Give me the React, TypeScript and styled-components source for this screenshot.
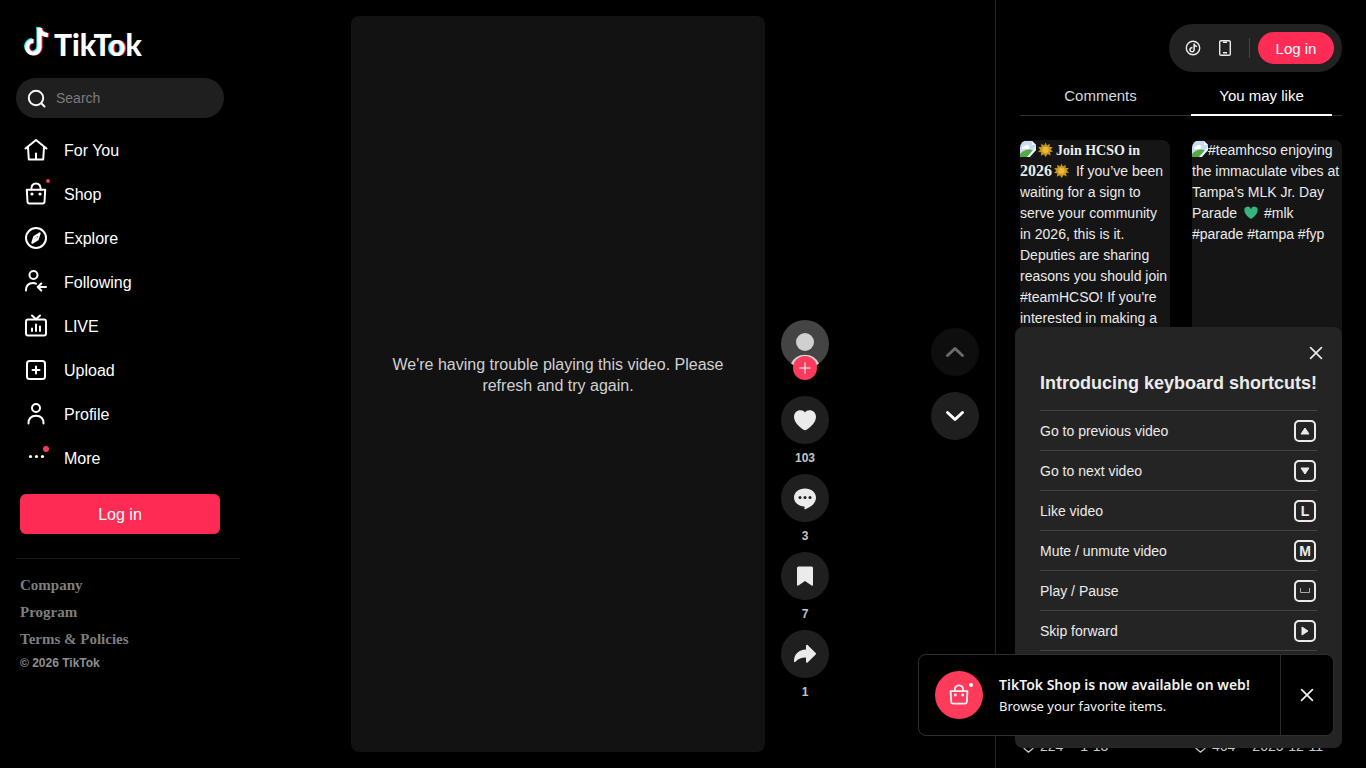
import React from "react";
import styled, { createGlobalStyle } from "styled-components";

const sans = `"Liberation Sans", Arial, sans-serif`;
const serif = `"Liberation Serif", "Times New Roman", serif`;
const brand = "#fe2c55";

const GlobalStyle = createGlobalStyle`
  * { box-sizing: border-box; }
  body { margin: 0; background: #000; color: #f6f6f6; font-family: ${sans}; }
  button { border: 0; padding: 0; background: none; color: inherit; font-family: inherit; cursor: pointer; }
  a { color: inherit; text-decoration: none; }
  svg { display: block; flex: none; }
  h2, p, ul { margin: 0; padding: 0; }
  ul { list-style: none; }
`;

const Page = styled.div`
  display: grid;
  grid-template-columns: 249px minmax(0, 1fr) 371px;
  grid-template-rows: 100vh;
  height: 100vh;
  overflow: hidden;
`;

/* Sidebar */
const Sidebar = styled.aside`
  display: flex;
  flex-direction: column;
  padding: 24px 9px 0 16px;
`;
const Logo = styled.a`
  display: flex;
  align-items: center;
  gap: 3px;
  height: 36px;
  margin: 0 0 18px 7px;
`;
const Wordmark = styled.span`
  padding-top: 3px;
  color: #fff;
  font: 900 30px/36px Lato, sans-serif;
`;
const ShadowLetter = styled.span`
  text-shadow: -1px 0 #25f4ee, 1px 0 ${brand};
`;
const SearchBox = styled.label`
  display: flex;
  align-items: center;
  gap: 8px;
  width: 208px;
  height: 40px;
  padding: 0 12px 0 8px;
  border-radius: 20px;
  background: #1f1f1f;
`;
const SearchInput = styled.input`
  flex: 1;
  min-width: 0;
  border: 0;
  outline: 0;
  padding: 0;
  background: transparent;
  color: #fff;
  font: 14px/20px ${sans};
  &::placeholder { color: #7c7c7c; opacity: 1; }
`;
const NavList = styled.ul`
  margin-top: 10px;
`;
const NavLink = styled.a`
  display: flex;
  align-items: center;
  gap: 16px;
  height: 44px;
  padding-left: 8px;
  font-size: 16px;
  color: #fff;
`;
const NavText = styled.span`
  padding-top: 2px;
`;
const IconWrap = styled.span`
  position: relative;
  display: block;
`;
const Dot = styled.span<{ $size: number; $top: number; $right: number; $color?: string }>`
  position: absolute;
  top: ${(p) => p.$top}px;
  right: ${(p) => p.$right}px;
  width: ${(p) => p.$size}px;
  height: ${(p) => p.$size}px;
  border-radius: 50%;
  background: ${(p) => p.$color ?? "#f33b5e"};
`;
const LoginButton = styled.button<{ $pill?: boolean }>`
  width: ${(p) => (p.$pill ? 76 : 200)}px;
  height: ${(p) => (p.$pill ? 32 : 40)}px;
  margin: ${(p) => (p.$pill ? "0" : "14px 0 0 4px")};
  padding-top: 1px;
  border-radius: ${(p) => (p.$pill ? 16 : 6)}px;
  background: ${brand};
  color: #fff;
  font-size: ${(p) => (p.$pill ? 15 : 16)}px;
`;
const FooterLinks = styled.footer`
  display: flex;
  flex-direction: column;
  margin-top: 24px;
  padding: 13px 0 0 4px;
  border-top: 1px solid #1a1a1a;
  color: #7e7e7e;
  font: bold 15px/27px ${serif};
`;
const Copyright = styled.small`
  color: #8f8f8f;
  font: bold 12px/20px ${sans};
`;

/* Player */
const Main = styled.main`
  display: flex;
  align-items: center;
  min-height: 0;
  padding: 16px 16px 16px 0;
`;
const Player = styled.section`
  flex: 1;
  display: flex;
  justify-content: center;
  gap: 16px;
  height: calc(100vh - 32px);
`;
const Video = styled.div`
  display: flex;
  align-items: center;
  aspect-ratio: 9 / 16;
  height: 100%;
  padding: 0 40px 18px;
  border-radius: 8px;
  background: #121212;
  color: #d0d0d0;
  font-size: 16px;
  line-height: 21px;
  text-align: center;
`;
const Actions = styled.div`
  display: flex;
  flex-direction: column;
  justify-content: flex-end;
  padding-bottom: 44px;
`;
const AvatarBlock = styled.div`
  position: relative;
  height: 76px;
`;
const FollowButton = styled.button`
  position: absolute;
  top: 36px;
  left: 12px;
  display: grid;
  place-items: center;
  width: 24px;
  height: 24px;
  border-radius: 50%;
  background: #fb3a5d;
`;
const RoundButton = styled.button<{ $faded?: boolean }>`
  display: grid;
  place-items: center;
  width: 48px;
  height: 48px;
  border-radius: 50%;
  background: ${(p) => (p.$faded ? "#0e0e0e" : "#1f1f1f")};
  color: ${(p) => (p.$faded ? "#6b6b6b" : "#fff")};
`;
const Action = styled.div`
  display: flex;
  flex-direction: column;
  align-items: center;
  height: 78px;
`;
const Count = styled.strong`
  margin-top: 6px;
  color: #c4c4c4;
  font-size: 12px;
  line-height: 16px;
`;
const Pager = styled.nav`
  display: flex;
  flex-direction: column;
  gap: 16px;
`;

/* Right column */
const Panel = styled.aside`
  display: flex;
  flex-direction: column;
  min-height: 0;
  padding: 24px 24px 0;
  border-left: 1px solid #242424;
`;
const TopBar = styled.div`
  align-self: flex-end;
  display: flex;
  align-items: center;
  height: 48px;
  padding: 0 8px 0 16px;
  border-radius: 24px;
  background: #222;
`;
const TopIcon = styled.button`
  margin-right: 16px;
`;
const Divider = styled.span`
  width: 1px;
  height: 20px;
  margin-right: 8px;
  background: #444;
`;
const Tabs = styled.div`
  display: flex;
  height: 44px;
  border-bottom: 1px solid #303030;
`;
const Tab = styled.button<{ $active?: boolean }>`
  flex: 1;
  height: 44px;
  margin: 0 10px;
  padding-top: 4px;
  border-bottom: 2px solid ${(p) => (p.$active ? "#fff" : "transparent")};
  color: ${(p) => (p.$active ? "#fff" : "#d8d8d8")};
  font-size: 15px;
`;
const Cards = styled.div`
  flex: 1;
  display: grid;
  grid-template-columns: 1fr 1fr;
  gap: 22px;
  min-height: 0;
  padding-top: 24px;
`;
const Card = styled.article`
  display: flex;
  flex-direction: column;
  min-height: 0;
`;
const Thumb = styled.div`
  flex: none;
  height: 200px;
  overflow: hidden;
  border-radius: 8px;
  background: #151515;
  color: #ebebeb;
  font-size: 14px;
  line-height: 21px;
  & svg { display: inline-block; vertical-align: -3px; }
`;
const SunIcon = styled.svg`
  margin: 0 3px 0 2px;
`;
const HeartIcon = styled.svg`
  margin: 0 1px 0 2px;
`;
const SerifText = styled.strong`
  font-family: ${serif};
`;
const SerifYear = styled(SerifText)`
  font-size: 16px;
  line-height: 20px;
`;
const Stats = styled.div`
  display: flex;
  align-items: center;
  gap: 4px;
  margin-top: auto;
  padding: 0 0 13px 1px;
  color: #c8c8c8;
  font-size: 14px;
  line-height: 18px;
`;
const DateText = styled.span`
  margin-left: 13px;
`;

/* Overlays */
const Shortcuts = styled.section`
  position: fixed;
  right: 24px;
  bottom: 20px;
  width: 327px;
  padding: 16px 25px 97px;
  border-radius: 8px;
  background: #242424;
  color: #ebebeb;
`;
const ShortcutsClose = styled.button`
  display: block;
  margin: 0 -9px 0 auto;
`;
const ShortcutsTitle = styled.h2`
  padding: 8px 0 14px;
  font-size: 18px;
  line-height: 25px;
  white-space: nowrap;
`;
const ShortcutRow = styled.li`
  display: flex;
  align-items: center;
  justify-content: space-between;
  height: 40px;
  border-top: 1px solid #444;
  font-size: 14px;
  &:last-child { height: 41px; border-bottom: 1px solid #444; }
`;
const Key = styled.kbd`
  display: grid;
  place-items: center;
  width: 22px;
  height: 22px;
  margin-right: 1px;
  border: 2px solid #ebebeb;
  border-radius: 5px;
  font: bold 14px/18px ${sans};
`;
const Toast = styled.section`
  position: fixed;
  right: 32px;
  bottom: 32px;
  display: flex;
  width: 416px;
  height: 82px;
  border: 1px solid #2f2f2f;
  border-radius: 8px;
  background: #000;
  color: #f2f2f2;
`;
const ToastBody = styled.div`
  flex: 1;
  display: flex;
  align-items: center;
  gap: 16px;
  padding-left: 16px;
  font: 13px/22px "Noto Sans", sans-serif;
  white-space: nowrap;
`;
const ToastBadge = styled.span`
  display: grid;
  place-items: center;
  width: 48px;
  height: 48px;
  border-radius: 50%;
  background: #ff3b5c;
`;
const ToastTitle = styled.h2`
  font-size: 14px;
  font-weight: 600;
  line-height: 21px;
`;
const ToastClose = styled.button`
  display: grid;
  place-items: center;
  width: 53px;
  border-left: 1px solid #2a2a2a;
`;

const notePath =
  "M12.525.02c1.31-.02 2.61-.01 3.91-.02.08 1.53.63 3.09 1.75 4.17 1.12 1.11 2.7 1.62 4.24 1.79v4.03c-1.44-.05-2.89-.35-4.2-.97-.57-.26-1.1-.59-1.62-.93-.01 2.92.01 5.84-.02 8.75-.08 1.4-.54 2.79-1.35 3.94-1.31 1.92-3.58 3.17-5.91 3.21-1.43.08-2.86-.31-4.08-1.03-2.02-1.19-3.44-3.37-3.65-5.71-.02-.5-.03-1-.01-1.49.18-1.9 1.12-3.72 2.58-4.96 1.66-1.44 3.98-2.13 6.15-1.72.02 1.48-.04 2.96-.04 4.44-.99-.32-2.15-.23-3.02.37-.63.41-1.11 1.04-1.36 1.75-.21.51-.15 1.07-.14 1.61.24 1.64 1.82 3.02 3.5 2.87 1.12-.01 2.19-.66 2.77-1.61.19-.33.4-.67.41-1.06.1-1.79.06-3.57.07-5.36.01-4.03-.01-8.05.02-12.07z";

const Line = ({ children, size = 24, width = 2 }: { children: React.ReactNode; size?: number; width?: number }) => (
  <svg width={size} height={size} viewBox="0 0 24 24" fill="none" stroke="currentColor" strokeWidth={width} strokeLinecap="round" strokeLinejoin="round" aria-hidden="true">
    {children}
  </svg>
);

const LogoNote = ({ x, y, color }: { x: number; y: number; color: string }) => (
  <g transform={`translate(${x} ${y})`} fill="none" stroke={color} strokeWidth="4.2">
    <path d="M15.500 1V20.300a6.200 6.200 0 1 1-6.200-6.200" />
    <path d="M15.500 1.500c.6 3.800 3.700 6.300 8.300 6.800" strokeWidth="4.400" />
  </g>
);

const Bag = () => (
  <>
    <path d="M2.800 7.800h18.400l-.7 11.900a1.800 1.800 0 0 1-1.800 1.700H5.300a1.800 1.800 0 0 1-1.800-1.700z" />
    <path d="M7.300 7.500C7.300 3.500 9 1.500 12 1.500s4.700 2 4.700 6" />
    <circle cx="8" cy="12" r="1.600" fill="currentColor" stroke="none" />
    <circle cx="16" cy="12" r="1.600" fill="currentColor" stroke="none" />
  </>
);

const Cross = ({ size, width }: { size: number; width: number }) => (
  <Line size={size} width={width}>
    <path d="M5.500 5.500l13 13M18.500 5.500l-13 13" />
  </Line>
);

const BrokenImage = () => (
  <svg width="16" height="18" viewBox="0 0 16 18" aria-hidden="true">
    <path d="M0 1h12l4 4v5l-6 7H0z" fill="#c9dcf5" />
    <path d="M12 1v4h4z" fill="#fff" />
    <path d="M2 9q0-3 3-3 1-2 3-1 2 1 1 4z" fill="#fff" />
    <path d="M0 17v-3q5-6 13-4l-5 7z" fill="#56a845" />
    <path d="M16 6v4l-7 7H7l7-8z" fill="#f7f7f7" />
  </svg>
);

const Sun = () => (
  <SunIcon width="15" height="16" viewBox="0 0 16 16" aria-hidden="true">
    <path d="M8 0l1.500 3.200L12.500 1.300l-.2 3.500 3.500.1-2.300 2.600 2.500 2.200-3.300.4.900 3.700-3.200-1.500L8 15.500l-1.700-3L3 14.200l.5-3.700L0 10.200l2.400-2.500L.2 5l3.500-.3-.3-3.400 3.200 1.800z" fill="#c9951c" />
    <circle cx="8" cy="7.800" r="3.400" fill="#e8b93a" />
  </SunIcon>
);

const GreenHeart = () => (
  <HeartIcon width="16" height="16" viewBox="0 0 17 16" aria-hidden="true">
    <path d="M8.500 14.500C4 11 1.500 8.500 1.500 5.500a3.500 3.500 0 0 1 7-1.400 3.500 3.500 0 0 1 7 1.400c0 3-2.500 5.500-7 9z" fill="#36b37e" />
  </HeartIcon>
);

const navItems: { label: string; icon: React.ReactNode; dot?: "small" | "large" }[] = [
  { label: "For You", icon: <><path d="M1.500 10.500L12 2l10.500 8.500" /><path d="M4 9.500l.8 12h14.400l.8-12M12 15.500v6" /></> },
  { label: "Shop", icon: <Bag />, dot: "small" },
  { label: "Explore", icon: <><circle cx="12" cy="12" r="10" /><path d="M15.700 7.300l-1.900 6-5.500 3.500 1.900-6z" /><path d="M12.500 11.500l-2 2.500" /></> },
  { label: "Following", icon: <><circle cx="9.500" cy="5" r="4" /><path d="M2 20.500c0-5 3-7.500 7-7.500 1.200 0 2.200.2 3 .6M22 17h-8M17.300 13.500l-3.600 3.500 3.600 3.500" /></> },
  { label: "LIVE", icon: <><rect x="2" y="5.500" width="20" height="16" rx="2" /><path d="M8 1.500l4 3.700 4-3.700M8 14.500v2.500M12 10.500v6.500M16 12.500v4.500" /></> },
  { label: "Upload", icon: <><rect x="3" y="3" width="18" height="18" rx="2.500" /><path d="M12 8.500v7M8.500 12h7" /></> },
  { label: "Profile", icon: <><circle cx="12" cy="6" r="4" /><path d="M4.500 21.500c0-5 3-7.700 7.500-7.700s7.500 2.700 7.500 7.700" /></> },
  { label: "More", icon: <g fill="currentColor" stroke="none"><circle cx="6.500" cy="10.500" r="1.600" /><circle cx="12.500" cy="10.500" r="1.600" /><circle cx="18.500" cy="10.500" r="1.600" /></g>, dot: "large" },
];

const actions = [
  { label: "Like", count: "103", icon: <path d="M7.500 2.200c2 0 3.600.9 4.500 2.200.9-1.300 2.500-2.200 4.500-2.200 3.600 0 6.500 2.700 6.500 6.500 0 5-4.500 9.800-9.500 13-.9.600-2.100.6-3 0C5.500 18.500 1 13.700 1 8.700c0-3.800 2.900-6.500 6.500-6.500z" /> },
  { label: "Comments", count: "3", icon: <><path d="M12 2.500c6.300 0 11 3.900 11 9 0 5.500-4.500 9.500-11.500 12V20.400C5.400 20.200 1 16.500 1 11.500c0-5.100 4.700-9 11-9z" /><g fill="#1f1f1f"><circle cx="7" cy="11.500" r="1.500" /><circle cx="12" cy="11.500" r="1.500" /><circle cx="17" cy="11.500" r="1.500" /></g></> },
  { label: "Save", count: "7", icon: <path d="M5.500 2.500h13A1.500 1.500 0 0 1 20 4v16.800c0 .8-.8 1.200-1.400.7L12 17l-6.600 4.500c-.6.500-1.400.1-1.400-.7V4a1.500 1.500 0 0 1 1.500-1.500z" /> },
  { label: "Share", count: "1", icon: <path d="M13 3.800c0-1 .9-1.300 1.600-.7l8.100 7.900c.5.500.5 1.100 0 1.600l-8.100 7.900c-.7.600-1.600.3-1.600-.7v-4.200c-4.700 0-7.800 1-10.500 4.200-.6.700-1.500.5-1.500-.4C1 12.300 5.500 7.800 13 7.500z" /> },
];

const shortcuts: { label: string; icon: React.ReactNode }[] = [
  { label: "Go to previous video", icon: <svg width="10" height="8" fill="currentColor"><path d="M5 1l4 6H1z" stroke="currentColor" strokeLinejoin="round" /></svg> },
  { label: "Go to next video", icon: <svg width="10" height="8" fill="currentColor"><path d="M5 7L1 1h8z" stroke="currentColor" strokeLinejoin="round" /></svg> },
  { label: "Like video", icon: "L" },
  { label: "Mute / unmute video", icon: "M" },
  { label: "Play / Pause", icon: <svg width="10" height="6" fill="none"><path d="M.5 0v4.500h9V0" stroke="#aaa" /></svg> },
  { label: "Skip forward", icon: <svg width="8" height="10" fill="currentColor"><path d="M7 5L1 9V1z" stroke="currentColor" strokeLinejoin="round" /></svg> },
];

const StatRow = ({ likes, date }: { likes: string; date: string }) => (
  <Stats>
    <Line size={15} width={2}>
      <path d="M12 21C6 17 2 13 2 8.500a5 5 0 0 1 10-2 5 5 0 0 1 10 2C22 13 18 17 12 21z" />
    </Line>
    <span>{likes}</span>
    <DateText>{date}</DateText>
  </Stats>
);

export default function App() {
  return (
    <>
      <GlobalStyle />
      <Page>
        <Sidebar>
          <Logo href="#">
            <svg width="28" height="32" viewBox="0 0 28 32" aria-hidden="true">
              <LogoNote x={0} y={0} color="#25f4ee" />
              <LogoNote x={2} y={1} color={brand} />
              <LogoNote x={1} y={1} color="#fff" />
            </svg>
            <Wordmark>TikT<ShadowLetter>o</ShadowLetter>k</Wordmark>
          </Logo>
          <SearchBox>
            <Line>
              <circle cx="12" cy="12" r="7.200" />
              <path d="M17.300 17.300l3.200 3.200" />
            </Line>
            <SearchInput type="search" placeholder="Search" aria-label="Search" />
          </SearchBox>
          <nav>
            <NavList>
              {navItems.map((item) => (
                <li key={item.label}>
                  <NavLink href="#">
                    <IconWrap>
                      <Line>{item.icon}</Line>
                      {item.dot === "small" && <Dot $size={4} $top={-3} $right={-2} />}
                      {item.dot === "large" && <Dot $size={6} $top={0} $right={-1} />}
                    </IconWrap>
                    <NavText>{item.label}</NavText>
                  </NavLink>
                </li>
              ))}
            </NavList>
          </nav>
          <LoginButton>Log in</LoginButton>
          <FooterLinks>
            <a href="#">Company</a>
            <a href="#">Program</a>
            <a href="#">Terms &amp; Policies</a>
            <Copyright>© 2026 TikTok</Copyright>
          </FooterLinks>
        </Sidebar>

        <Main>
          <Player>
            <Video>
              <p>We're having trouble playing this video. Please refresh and try again.</p>
            </Video>
            <Actions>
              <AvatarBlock>
                <svg width="48" height="48" viewBox="0 0 48 48" aria-hidden="true">
                  <circle cx="24" cy="24" r="24" fill="#444" />
                  <circle cx="24" cy="22" r="9" fill="#d0d0d0" />
                  <path d="M10 43.500a15.500 15.500 0 0 1 28 0A24 24 0 0 1 10 43.500z" fill="#d0d0d0" />
                </svg>
                <FollowButton aria-label="Follow">
                  <Line size={14} width={2}><path d="M12 3v18M3 12h18" /></Line>
                </FollowButton>
              </AvatarBlock>
              {actions.map((a) => (
                <Action key={a.label}>
                  <RoundButton aria-label={a.label}>
                    <svg width="24" height="24" viewBox="0 0 24 24" fill="#ebebeb" aria-hidden="true">{a.icon}</svg>
                  </RoundButton>
                  <Count>{a.count}</Count>
                </Action>
              ))}
            </Actions>
          </Player>
          <Pager>
            <RoundButton $faded aria-label="Previous video">
              <Line width={3}><path d="M4.500 15.500L12 8.500l7.500 7" /></Line>
            </RoundButton>
            <RoundButton aria-label="Next video">
              <Line width={3}><path d="M4.500 8.500l7.500 7 7.500-7" /></Line>
            </RoundButton>
          </Pager>
        </Main>

        <Panel>
          <TopBar>
            <TopIcon aria-label="Get coins">
              <svg width="16" height="16" viewBox="0 0 16 16" aria-hidden="true">
                <circle cx="8" cy="8" r="6.700" fill="none" stroke="#ebebeb" strokeWidth="1.400" />
                <g transform="translate(3.600 3.400) scale(.38)"><path d={notePath} fill="#ebebeb" /></g>
              </svg>
            </TopIcon>
            <TopIcon aria-label="Get app">
              <svg width="16" height="16" viewBox="0 0 16 16" fill="none" stroke="#ebebeb" strokeWidth="1.400" aria-hidden="true">
                <rect x="2.700" y=".7" width="10.600" height="14.600" rx="1.300" />
                <path d="M6 2.200h4M6 12.700h4" />
              </svg>
            </TopIcon>
            <Divider />
            <LoginButton $pill>Log in</LoginButton>
          </TopBar>
          <Tabs role="tablist">
            <Tab role="tab" aria-selected={false}>Comments</Tab>
            <Tab role="tab" aria-selected $active>You may like</Tab>
          </Tabs>
          <Cards>
            <Card>
              <Thumb>
                <BrokenImage /><Sun /><SerifText>Join HCSO in </SerifText><SerifYear>2026</SerifYear><Sun /> If you’ve been waiting for a sign to serve your community in 2026, this is it. Deputies are sharing reasons you should join #teamHCSO! If you're interested in making a
              </Thumb>
              <StatRow likes="224" date="1-13" />
            </Card>
            <Card>
              <Thumb>
                <BrokenImage />#teamhcso enjoying the immaculate vibes at Tampa’s MLK Jr. Day Parade <GreenHeart /> #mlk #parade #tampa #fyp
              </Thumb>
              <StatRow likes="464" date="2025-12-11" />
            </Card>
          </Cards>
        </Panel>
      </Page>

      <Shortcuts>
        <ShortcutsClose aria-label="Close shortcuts"><Cross size={20} width={2} /></ShortcutsClose>
        <ShortcutsTitle>Introducing keyboard shortcuts!</ShortcutsTitle>
        <ul>
          {shortcuts.map((s) => (
            <ShortcutRow key={s.label}>
              {s.label}
              <Key>{s.icon}</Key>
            </ShortcutRow>
          ))}
        </ul>
      </Shortcuts>

      <Toast role="status">
        <ToastBody>
          <ToastBadge>
            <IconWrap>
              <Line size={22}><Bag /></Line>
              <Dot $size={4} $top={-1} $right={-3} $color="#fff" />
            </IconWrap>
          </ToastBadge>
          <div>
            <ToastTitle>TikTok Shop is now available on web!</ToastTitle>
            <p>Browse your favorite items.</p>
          </div>
        </ToastBody>
        <ToastClose aria-label="Dismiss"><Cross size={20} width={2} /></ToastClose>
      </Toast>
    </>
  );
}
